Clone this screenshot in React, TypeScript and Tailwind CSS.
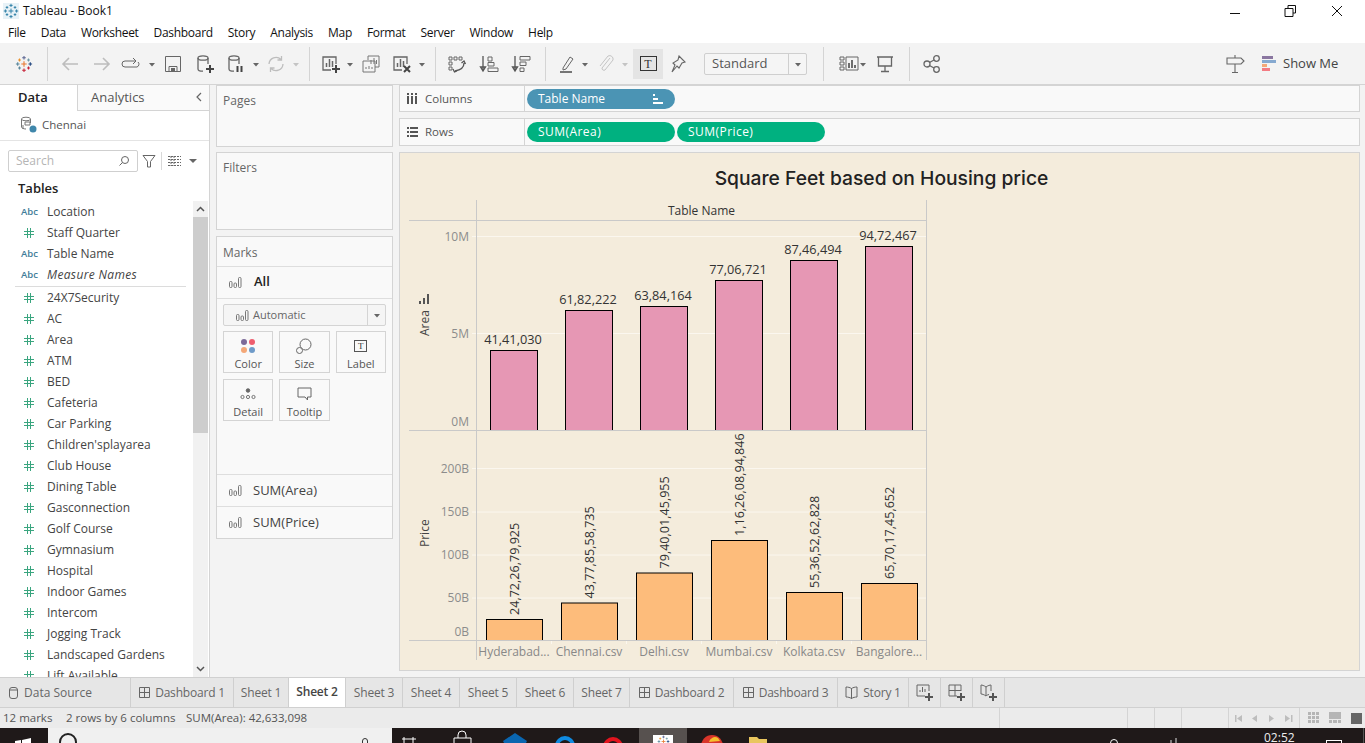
import React from "react";

const F = "font-['Open_Sans',sans-serif]";

function Svg({ w = 20, h = 20, cls = "", children }: { w?: number; h?: number; cls?: string; children: React.ReactNode }) {
  return (
    <svg width={w} height={h} viewBox={`0 0 ${w} ${h}`} fill="none" stroke="#666" strokeWidth="1.3" className={"shrink-0 " + cls}>
      {children}
    </svg>
  );
}

const Dd = ({ cls = "", light = false }: { cls?: string; light?: boolean }) => (
  <svg width="8" height="20" viewBox="0 0 8 20" className={"shrink-0 " + cls}>
    <path d="M1 9h6l-3 3.5z" fill={light ? "#c4c4c4" : "#666"} />
  </svg>
);
const Div = ({ cls = "" }: { cls?: string }) => <div className={"w-px h-[34px] bg-[#d4d4d4] shrink-0 " + cls} />;

const TableauMark = ({ size = 20, mono = false }: { size?: number; mono?: boolean }) => {
  const c = (x: number, y: number, l: number, col: string, k: string) => (
    <path key={k} d={`M${x - l} ${y}h${2 * l}M${x} ${y - l}v${2 * l}`} stroke={mono ? "#2f7fa6" : col} strokeWidth="1.2" />
  );
  return (
    <svg width={size} height={size} viewBox="0 0 20 20" fill="none" className={"shrink-0 " + (mono ? "bg-[#e8f2f7]" : "")}>
      {c(10, 10, 3, "#e8762d", "a")}
      {c(10, 3, 2, "#5b6591", "b")}
      {c(10, 17, 2, "#c72037", "c")}
      {c(3, 10, 2, "#59879b", "d")}
      {c(17, 10, 2, "#1f447e", "e")}
      {c(5, 5.5, 1.6, "#eb912b", "f")}
      {c(15, 5.5, 1.6, "#7099a6", "g")}
      {c(5, 14.5, 1.6, "#5b879b", "h")}
      {c(15, 14.5, 1.6, "#c72037", "i")}
    </svg>
  );
};

const SheetPlus = ({ x = false }: { x?: boolean }) => (
  <Svg>
    <path d="M15 10V3H2v13h8" />
    <path d="M5.5 13V9M8.5 13V5M11.5 13V7" strokeWidth="1.5" />
    {x ? (
      <path d="M12 12l6 6M18 12l-6 6" stroke="#444" strokeWidth="2" />
    ) : (
      <path d="M15 11v8M11 15h8" stroke="#444" strokeWidth="2" />
    )}
  </Svg>
);

const Cyl = ({ children }: { children: React.ReactNode }) => (
  <Svg>
    <ellipse cx="8" cy="4" rx="5" ry="2.2" />
    <path d="M3 4v11c0 1.2 2 2.2 5 2.2M13 4v6" />
    {children}
  </Svg>
);

function Toolbar() {
  return (
    <div className="h-[42px] bg-[#f3f3f3] border-b border-[#d4d4d4] flex items-center shrink-0">
      <div className="w-[47px] flex justify-center shrink-0"><TableauMark size={18} /></div>
      <Div />
      <Svg cls="ml-[12px]"><path d="M18 10H3M9 4l-6 6 6 6" stroke="#bdbdbd" strokeWidth="1.6" /></Svg>
      <Svg cls="ml-[12px]"><path d="M2 10h15M11 4l6 6-6 6" stroke="#bdbdbd" strokeWidth="1.6" /></Svg>
      <Svg cls="ml-[9px]"><path d="M15 7H4a3 3 0 000 6h12a3 3 0 001-5" strokeWidth="1" /><path d="M12 4l3 3-3 3" strokeWidth="1" /></Svg>
      <Dd cls="ml-[7px]" />
      <Svg cls="ml-[7px]"><path d="M2.5 2.5h15v15h-15zM6 17.5v-5h8v5" strokeWidth="1" /><path d="M8 14h4v3H8z" fill="#666" stroke="none" /></Svg>
      <div className="ml-[12px]"><Cyl><path d="M15 11v8M11 15h8" stroke="#444" strokeWidth="2" /></Cyl></div>
      <div className="ml-[11px]"><Cyl><path d="M11.5 12v6M15.5 12v6" stroke="#444" strokeWidth="2" /></Cyl></div>
      <Dd cls="ml-[6px]" />
      <Svg cls="ml-[6px]"><path d="M3 10a7 7 0 0112-4.5M17 10a7 7 0 01-12 4.5M15.5 2v4h-4M4.5 18v-4h4" stroke="#bdbdbd" /></Svg>
      <Dd cls="ml-[6px]" light />
      <Div cls="ml-[9px]" />
      <div className="ml-[11px]"><SheetPlus /></div>
      <Dd cls="ml-[5px]" />
      <Svg cls="ml-[7px]"><path d="M7 6V2h11v11h-4M2 7h12v11H2z" stroke="#777" strokeWidth="1" /><path d="M10 10V6M13 10V4M15.500 10V6M5 15v-2M8 15v-3M11 15v-2" stroke="#777" strokeWidth="1" /></Svg>
      <div className="ml-[11px]"><SheetPlus x /></div>
      <Dd cls="ml-[6px]" />
      <Div cls="ml-[9px]" />
      <Svg cls="ml-[11px]"><path d="M2 3h3v3H2zM7 3h3v3H7zM12 3h3v3h-3zM2 8h3v3H2zM2 13h3v3H2z" strokeWidth="1" /><path d="M17 9c0 4-3 7-9 8M14.500 9l2.500-2 1.500 3M6 15l1.500 3 2.500-1" stroke="#555" /></Svg>
      <Svg cls="ml-[12px]"><path d="M4 2v14M1.500 13L4 17l2.500-4z" stroke="#555" /><path d="M9 3h4v4H9zM9 8.500h6v3.500H9zM9 14h10v3.500H9z" strokeWidth="1" /></Svg>
      <Svg cls="ml-[12px]"><path d="M4 2v14M1.500 13L4 17l2.500-4z" stroke="#555" /><path d="M9 2.500h10V6H9zM9 8h6v3.500H9zM9 14h4v3.500H9z" strokeWidth="1" /></Svg>
      <Div cls="ml-[14px]" />
      <Svg cls="ml-[12px]"><path d="M5 14L12 3l3 2-7 10-3 1z" strokeWidth="1" /><path d="M2 18h12" stroke="#555" strokeWidth="1.6" /></Svg>
      <Dd cls="ml-[3px]" />
      <Svg cls="ml-[6px]"><path d="M15 4l-8 10a2 2 0 003 2l8-10a3.500 3.500 0 00-5-4L5 12" stroke="#c4c4c4" strokeWidth="1" /></Svg>
      <Dd cls="ml-[6px]" light />
      <div className="ml-[4px] w-[30px] h-[30px] bg-[#e4e4e4] flex items-center justify-center shrink-0">
        <div className="w-[17px] h-[15px] border border-[#333] flex items-center justify-center text-[12px] leading-none text-[#333] font-['Liberation_Serif',serif]">T</div>
      </div>
      <Svg cls="ml-[4px]"><path d="M12 2l6 6-3 1-3 5-2-2-5 6 3-7-2-2 5-3z" strokeWidth="1.1" /></Svg>
      <div className="ml-[17px] w-[103px] h-[22px] border border-[#cfcfcf] rounded-[2px] flex items-center shrink-0 bg-[#f5f5f5]">
        <span className="pl-[7px] text-[13px] text-[#555] flex-1">Standard</span>
        <div className="w-[18px] h-full border-l border-[#cfcfcf] flex items-center justify-center"><Dd /></div>
      </div>
      <Div cls="ml-[16px]" />
      <Svg cls="ml-[15px]"><path d="M1 3h4v3H1zM1 8h4v3H1zM1 13h4v3H1zM7 3h12v13H7z" strokeWidth="1" /><path d="M10 14V9M13 14V6M16 14v-3" stroke="#555" strokeWidth="1.7" /></Svg>
      <Dd />
      <Svg cls="ml-[8px]"><path d="M2 3h16M3.500 3v9h13V3M10 12v5M6 17.500h8" /></Svg>
      <Div cls="ml-[14px]" />
      <Svg cls="ml-[12px]"><circle cx="5" cy="10" r="3" /><circle cx="14.500" cy="4.500" r="2.800" /><circle cx="14.500" cy="15.500" r="2.800" /><path d="M7.500 8.500l4.500-2.500M7.500 11.500l4.500 2.500" /></Svg>
      <Svg cls="ml-[283px]"><path d="M10 1v3M2 4h14l3 3-3 3H2zM10 10v8M7 18.500h6" strokeWidth="1.1" /></Svg>
      <div className="ml-[17px] flex items-center gap-[7px] shrink-0">
        <div className="flex flex-col gap-px w-[14px]">
          <div className="h-[3px] w-[11px] bg-[#8a76a0]" />
          <div className="h-[3px] w-[14px] bg-[#86a9d0]" />
          <div className="h-[3px] w-[5px] bg-[#f4a878]" />
          <div className="h-[3px] w-[8px] bg-[#f37b83]" />
        </div>
        <span className="text-[13px] text-[#444]">Show Me</span>
      </div>
    </div>
  );
}

const fields: [string, "a" | "n"][] = [
  ["24X7Security", "n"], ["AC", "n"], ["Area", "n"], ["ATM", "n"], ["BED", "n"], ["Cafeteria", "n"], ["Car Parking", "n"],
  ["Children'splayarea", "n"], ["Club House", "n"], ["Dining Table", "n"], ["Gasconnection", "n"], ["Golf Course", "n"],
  ["Gymnasium", "n"], ["Hospital", "n"], ["Indoor Games", "n"], ["Intercom", "n"], ["Jogging Track", "n"],
  ["Landscaped Gardens", "n"], ["Lift Available", "n"],
];

function Field({ name, t, italic }: { name: string; t: "a" | "n"; italic?: boolean }) {
  return (
    <div className="h-[21px] flex items-center shrink-0">
      {t === "a" ? (
        <div className="w-[47px] pl-[21px] shrink-0 leading-none text-[9.500px] font-semibold text-[#3f7d99]">Abc</div>
      ) : (
        <div className="w-[47px] pl-[24px] shrink-0">
          <svg width="10" height="10" viewBox="0 0 10 10" fill="none" stroke="#3aa57f" strokeWidth="1" className="block">
            <path d="M3.500 0v10M6.500 0v10M0 3.500h10M0 6.500h10" />
          </svg>
        </div>
      )}
      <span className={"text-[12px] text-[#444] " + (italic ? "italic tracking-[0.35px]" : "")}>{name}</span>
    </div>
  );
}

function DataPane() {
  return (
    <div className="w-[210px] h-full bg-white border-r border-[#d4d4d4] flex flex-col shrink-0 overflow-hidden">
      <div className="h-[26px] flex shrink-0">
        <div className="w-[77px] flex items-center pl-[18px] font-semibold text-[13px] text-[#222]">Data</div>
        <div className="flex-1 bg-[#fafafa] border-l border-b border-[#d4d4d4] flex items-center pl-[13px] text-[13px] text-[#555] relative">
          Analytics
          <svg width="8" height="10" viewBox="0 0 8 10" className="absolute right-[6px] top-[7px]" fill="none" stroke="#666" strokeWidth="1.2"><path d="M6 1L2 5l4 4" /></svg>
        </div>
      </div>
      <div className="h-[30px] pb-[2px] border-b border-[#e4e4e4] flex items-center pl-[20px] shrink-0">
        <svg width="17" height="17" viewBox="0 0 17 17" fill="none" stroke="#777" strokeWidth="1" className="shrink-0">
          <ellipse cx="6" cy="3" rx="4.500" ry="1.800" />
          <path d="M1.500 3v8c0 1 2 2 4.500 2M10.500 3v4M5 6h5v3H5zM3 9v4" />
          <circle cx="13" cy="13" r="3.500" fill="#3f87ab" stroke="none" />
        </svg>
        <span className="ml-[5px] text-[11.500px] text-[#555]">Chennai</span>
      </div>
      <div className="h-[21px] mt-[9px] flex items-center shrink-0">
        <div className="ml-[8px] w-[130px] h-[22px] border border-[#cfcfcf] rounded-[2px] flex items-center justify-between px-[7px] text-[12px] text-[#b5b5b5]">
          Search
          <svg width="12" height="12" viewBox="0 0 12 12" fill="none" stroke="#666" strokeWidth="1"><circle cx="7" cy="5" r="3.500" /><path d="M4.500 7.500L1.500 10.500" /></svg>
        </div>
        <svg width="16" height="16" viewBox="0 0 16 16" fill="none" stroke="#666" strokeWidth="1" className="ml-[3px] shrink-0"><path d="M2 2.500h12L9.500 8.500V14h-3V8.500z" /></svg>
        <div className="ml-[4px] w-px h-[18px] bg-[#d8d8d8]" />
        <svg width="13" height="10" viewBox="0 0 13 10" fill="none" stroke="#666" strokeWidth="1" className="ml-[6px] shrink-0"><path d="M0 .5h13M0 3.500h13M0 6.500h13M0 9.500h13M3 0v10M6 0v10" strokeDasharray="2 1" /></svg>
        <svg width="8" height="6" viewBox="0 0 8 6" className="ml-[8px] shrink-0"><path d="M0 1h8L4 5z" fill="#666" /></svg>
      </div>
      <div className="h-[20px] mt-[8px] pl-[18px] text-[13px] font-semibold text-[#222] flex items-center shrink-0">Tables</div>
      <div className="flex-1 flex min-h-0 mt-[2px] overflow-hidden">
        <div className="flex-1 flex flex-col overflow-hidden min-w-0">
          <Field name="Location" t="a" />
          <Field name="Staff Quarter" t="n" />
          <Field name="Table Name" t="a" />
          <Field name="Measure Names" t="a" italic />
          <div className="h-[2px] ml-[15px] mr-[7px] border-b border-[#dcdcdc] shrink-0" />
          {fields.map(([n, t]) => <Field key={n} name={n} t={t} />)}
        </div>
        <div className="w-[15px] mr-px flex flex-col bg-[#f1f1f1] shrink-0">
          <div className="h-[16px] flex items-center justify-center">
            <svg width="9" height="6" viewBox="0 0 9 6" fill="none" stroke="#555" strokeWidth="1.500"><path d="M1 5l3.500-3.500L8 5" /></svg>
          </div>
          <div className="h-[216px] bg-[#cdcdcd]" />
          <div className="flex-1" />
          <div className="h-[16px] flex items-center justify-center">
            <svg width="9" height="6" viewBox="0 0 9 6" fill="none" stroke="#555" strokeWidth="1.500"><path d="M1 1l3.500 3.500L8 1" /></svg>
          </div>
        </div>
      </div>
    </div>
  );
}

const MarkIcon = () => (
  <svg width="13" height="11" viewBox="0 0 13 11" fill="none" stroke="#777" strokeWidth="1" className="shrink-0">
    <rect x=".5" y="4.500" width="2.500" height="6" rx="1" />
    <rect x="5" y="6" width="2.500" height="4.500" rx="1" />
    <rect x="9.500" y=".5" width="2.500" height="10" rx="1" />
  </svg>
);

function Card({ label, children }: { label: string; children: React.ReactNode }) {
  return (
    <div className="h-[42px] bg-[#f9f9f9] border border-[#d4d4d4] flex flex-col items-center justify-end pb-px text-[11px] text-[#555]">
      <div className="h-[20px] flex items-center justify-center">{children}</div>
      <span className="leading-[15px]">{label}</span>
    </div>
  );
}

function Cards() {
  return (
    <div className="w-[177px] ml-[6px] h-full flex flex-col shrink-0">
      <div className="h-[62px] bg-[#f9f9f9] border border-[#d4d4d4] px-[6px] pt-[6px] text-[12px] text-[#666]">Pages</div>
      <div className="h-[78px] mt-[5px] bg-[#f9f9f9] border border-[#d4d4d4] px-[6px] pt-[6px] text-[12px] text-[#666]">Filters</div>
      <div className="h-[303px] mt-[6px] bg-[#f9f9f9] border border-[#d4d4d4] flex flex-col">
        <div className="h-[29px] pt-[2px] px-[6px] flex items-center text-[12px] text-[#666] shrink-0">Marks</div>
        <div className="h-[33px] pb-px border-t border-b border-[#dedede] flex items-center pl-[12px] text-[13px] font-semibold text-[#222] shrink-0">
          <MarkIcon /><span className="ml-[12px]">All</span>
        </div>
        <div className="mx-[6px] mt-[5px] h-[22px] bg-[#f5f5f5] border border-[#d4d4d4] rounded-[2px] flex items-center text-[11px] text-[#666] shrink-0">
          <div className="pl-[12px] flex-1 flex items-center gap-[4px]"><MarkIcon />Automatic</div>
          <div className="w-[18px] h-full border-l border-[#d4d4d4] flex items-center justify-center"><Dd /></div>
        </div>
        <div className="mx-[6px] mt-[5px] grid grid-cols-3 gap-x-[6px] gap-y-[6px] shrink-0">
          <Card label="Color">
            <svg width="16" height="16" viewBox="0 0 16 16"><circle cx="4" cy="4" r="3" fill="#7c6a98" /><circle cx="12" cy="4" r="3" fill="#ee5e6e" /><circle cx="4" cy="12" r="3" fill="#f4a878" /><circle cx="12" cy="12" r="3" fill="#6f9bc9" /></svg>
          </Card>
          <Card label="Size">
            <svg width="16" height="16" viewBox="0 0 16 16" fill="none" stroke="#666"><circle cx="9.500" cy="6.500" r="5.500" /><circle cx="3.500" cy="12.500" r="3" fill="#f9f9f9" /></svg>
          </Card>
          <Card label="Label">
            <div className="w-[13px] h-[12px] border border-[#555] flex items-center justify-center text-[9px] leading-none font-['Liberation_Serif',serif] text-[#333]">T</div>
          </Card>
          <Card label="Detail">
            <svg width="16" height="12" viewBox="0 0 16 12" fill="none" stroke="#666" strokeWidth=".9"><circle cx="8" cy="2.500" r="1.800" fill="#666" /><circle cx="2.500" cy="9" r="1.600" /><circle cx="8" cy="9" r="1.600" /><circle cx="13.500" cy="9" r="1.600" /></svg>
          </Card>
          <Card label="Tooltip">
            <svg width="15" height="14" viewBox="0 0 15 14" fill="none" stroke="#666"><path d="M1 1h13v9H10.500v3L8 10H1z" /></svg>
          </Card>
        </div>
        <div className="flex-1" />
        <div className="h-[32px] border-t border-[#dedede] flex items-center pl-[12px] text-[13px] text-[#444] shrink-0">
          <MarkIcon /><span className="ml-[11px]">SUM(Area)</span>
        </div>
        <div className="h-[32px] border-t border-[#dedede] flex items-center pl-[12px] text-[13px] text-[#444] shrink-0">
          <MarkIcon /><span className="ml-[11px]">SUM(Price)</span>
        </div>
      </div>
    </div>
  );
}

function Shelf({ h, label, icon, children }: { h: string; label: string; icon: React.ReactNode; children: React.ReactNode }) {
  return (
    <div className={h + " bg-[#f9f9f9] border border-[#d4d4d4] flex items-center shrink-0"}>
      <div className="w-[125px] h-full border-r border-[#d4d4d4] flex items-center pl-[7px] text-[11.500px] text-[#555] shrink-0">
        <div className="w-[12px] flex items-center mr-[6px]">{icon}</div>{label}
      </div>
      <div className="pl-[2px] flex gap-[2px]">{children}</div>
    </div>
  );
}

const Pill = ({ label, green, sort }: { label: string; green?: boolean; sort?: boolean }) => (
  <div className={"w-[148px] h-[20px] rounded-full flex items-center justify-between pl-[11px] pr-[12px] text-[12px] text-white " + (green ? "bg-[#00b180] tracking-[0.45px]" : "bg-[#4b94b4]")}>
    {label}
    {sort && (
      <svg width="10" height="10" viewBox="0 0 10 10" fill="#fff"><path d="M0 0h2v2H0zM0 4h5v2H0zM0 8h10v2H0z" /></svg>
    )}
  </div>
);

const pink = [[490, 350, "41,41,030"], [565, 310, "61,82,222"], [640, 306, "63,84,164"], [715, 280, "77,06,721"], [790, 260, "87,46,494"], [865, 246, "94,72,467"]] as const;
const orange = [[486, 619, "24,72,26,79,925"], [561, 602.5, "43,77,85,58,735"], [636, 572.5, "79,40,01,45,955"], [711, 540, "1,16,26,08,94,846"], [786, 592, "55,36,52,62,828"], [861, 583, "65,70,17,45,652"]] as const;
const cats = ["Hyderabad...", "Chennai.csv", "Delhi.csv", "Mumbai.csv", "Kolkata.csv", "Bangalore..."];

function Chart() {
  return (
    <svg width="959" height="474" viewBox="400 196 959 474" className="block" fontFamily="'Open Sans',sans-serif">
      {[236, 333, 468, 511.500, 554.500, 597.500].map(y => (
        <line key={y} x1="472" x2="926" y1={y + 0.5} y2={y + 0.5} stroke="#fbf7ef" strokeWidth="1" />
      ))}
      {[551.500, 626.500, 701.500, 776.500, 851.500].map(x => (
        <line key={x} x1={x} x2={x} y1="641" y2="644" stroke="#fbf7ef" strokeWidth="1" />
      ))}
      <text x="701.500" y="215" textAnchor="middle" fontSize="12" fill="#333">Table Name</text>
      {[["10M", 241], ["5M", 338], ["0M", 426], ["200B", 473], ["150B", 516], ["100B", 559], ["50B", 602], ["0B", 636]].map(([t, y]) => (
        <text key={t} x="469" y={y} textAnchor="end" fontSize="12" fill="#8c8c8c">{t}</text>
      ))}
      <text transform="translate(429 336) rotate(-90)" fontSize="12" fill="#444">Area</text>
      <text transform="translate(429 547) rotate(-90)" fontSize="12" fill="#444">Price</text>
      <path d="M419 301h2v3h-2zM423 298h2v6h-2zM427 294h2v10h-2z" fill="#555" />
      {pink.map(([x, y, t]) => (
        <g key={t}>
          <rect x={x + 0.5} y={y + 0.5} width="47" height={430 - y} fill="#e697b4" stroke="#000" />
          <text x={x + 23} y={y - 6} textAnchor="middle" fontSize="12.750" fill="#333">{t}</text>
        </g>
      ))}
      {orange.map(([x, y, t]) => (
        <g key={t}>
          <rect x={x + 0.5} y={y + 0.5} width="56" height={640 - y} fill="#fdbc7b" stroke="#000" />
          <text transform={`translate(${x + 33} ${y - 4}) rotate(-90)`} fontSize="12.600" fill="#333">{t}</text>
        </g>
      ))}
      <g stroke="#c9c9c9" strokeWidth="1">
        <line x1="409" x2="926" y1="220.500" y2="220.500" />
        <line x1="409" x2="926" y1="430.500" y2="430.500" />
        <line x1="409" x2="926" y1="640.500" y2="640.500" />
        <line x1="476.500" x2="476.500" y1="200" y2="660" />
        <line x1="926.500" x2="926.500" y1="200" y2="660" />
      </g>
      {cats.map((c, i) => (
        <text key={c} x={514 + 75 * i} y="656" textAnchor="middle" fontSize="12" fill="#888">{c}</text>
      ))}
    </svg>
  );
}

function RightPane() {
  return (
    <div className="w-[961px] ml-[6px] h-full flex flex-col shrink-0">
      <Shelf h="h-[27px]" label="Columns" icon={<svg width="10" height="11" viewBox="0 0 10 11"><path d="M0 0h2v2H0zM4 0h2v2H4zM8 0h2v2H8zM0 3h2v8H0zM4 3h2v8H4zM8 3h2v8H8z" fill="#555" /></svg>}>
        <Pill label="Table Name" sort />
      </Shelf>
      <div className="h-[6px] shrink-0" />
      <Shelf h="h-[28px]" label="Rows" icon={<svg width="11" height="10" viewBox="0 0 11 10"><path d="M0 0h2v2H0zM3 0h8v2H3zM0 4h2v2H0zM3 4h8v2H3zM0 8h2v2H0zM3 8h8v2H3z" fill="#555" /></svg>}>
        <Pill label="SUM(Area)" green />
        <Pill label="SUM(Price)" green />
      </Shelf>
      <div className="mt-[6px] h-[519px] bg-[#f4ecdc] border border-[#d4d4d4] flex flex-col shrink-0">
        <div className="h-[43px] flex items-center justify-center pt-[7px] pl-[4px] text-[19.250px] font-medium text-[#222] shrink-0 font-['Inter',sans-serif]">
          Square Feet based on Housing price
        </div>
        <Chart />
      </div>
    </div>
  );
}

const Grid4 = () => (
  <svg width="11" height="11" viewBox="0 0 11 11" fill="none" stroke="#666" strokeWidth="1" className="shrink-0"><path d="M.5.5h10v10H.5zM.5 5.500h10M5.500.5v10" /></svg>
);

function Tab({ w, label, icon, active }: { w: string; label: string; icon?: React.ReactNode; active?: boolean }) {
  return (
    <div className={w + " h-full border-r border-[#cfcfcf] flex items-center justify-center gap-[5px] text-[12px] tracking-[-0.2px] shrink-0 " + (active ? "bg-white text-[#444] font-semibold pb-px" : "text-[#666]")}>
      {icon}{label}
    </div>
  );
}

function Tabs() {
  const addIcon = (inner: React.ReactNode) => (
    <svg width="18" height="18" viewBox="0 0 18 18" fill="none" stroke="#666" strokeWidth="1">
      {inner}
      <path d="M13 9v8M9 13h8" stroke="#555" strokeWidth="2" />
    </svg>
  );
  return (
    <div className="h-[31px] bg-[#e6e6e6] border-t border-b border-[#d0d0d0] flex shrink-0">
      <div className="w-[131px] h-full border-r border-[#cfcfcf] flex items-center pl-[9px] gap-[6px] text-[12px] text-[#666] shrink-0">
        <svg width="9" height="12" viewBox="0 0 9 12" fill="none" stroke="#666" strokeWidth="1"><rect x=".5" y=".5" width="8" height="11" rx="2.500" /><path d="M.5 3h8" /></svg>
        Data Source
      </div>
      <Tab w="w-[103px]" label="Dashboard 1" icon={<Grid4 />} />
      <Tab w="w-[55px]" label="Sheet 1" />
      <Tab w="w-[57px]" label="Sheet 2" active />
      <Tab w="w-[57px]" label="Sheet 3" />
      <Tab w="w-[57px]" label="Sheet 4" />
      <Tab w="w-[57px]" label="Sheet 5" />
      <Tab w="w-[57px]" label="Sheet 6" />
      <Tab w="w-[56px]" label="Sheet 7" />
      <Tab w="w-[104px]" label="Dashboard 2" icon={<Grid4 />} />
      <Tab w="w-[104px]" label="Dashboard 3" icon={<Grid4 />} />
      <Tab w="w-[71px]" label="Story 1" icon={<svg width="13" height="13" viewBox="0 0 13 13" fill="none" stroke="#666" strokeWidth="1"><path d="M6.500 2.500C5 1.500 3 1 1 1v10c2 0 4 .5 5.500 1.500M6.500 2.500C8 1.500 10 1 12 1v10c-2 0-4 .5-5.500 1.500zM6.500 2.500v10" /></svg>} />
      <div className="w-[32px] border-r border-[#cfcfcf] flex items-center justify-center">{addIcon(<path d="M9 12H1V1h12v6M4 8V6M6.500 8V3M9 8V5" />)}</div>
      <div className="w-[32px] border-r border-[#cfcfcf] flex items-center justify-center">{addIcon(<path d="M9 12H1V1h12v6M1 6.500h12M7 1v11" />)}</div>
      <div className="w-[32px] border-r border-[#cfcfcf] flex items-center justify-center">{addIcon(<path d="M6 3C4 1.500 2 1 1 1v9c1 0 3 .5 5 2 .5-.5 1-1 3-1.500M6 3c2-1.500 4-2 5-2v6M6 3v9" />)}</div>
    </div>
  );
}

function Status() {
  const Sep = ({ w }: { w: string }) => <div className={w + " h-full border-l border-[#d4d4d4] shrink-0"} />;
  return (
    <div className="h-[20px] bg-[#ebebeb] flex items-center text-[11.500px] text-[#555] shrink-0">
      <span className="w-[66px] pl-[3px] shrink-0">12 marks</span>
      <span className="w-[120px] shrink-0">2 rows by 6 columns</span>
      <span className="w-[813px] shrink-0">SUM(Area): 42,633,098</span>
      <Sep w="w-[128px]" />
      <Sep w="w-[27px]" />
      <Sep w="w-[27px]" />
      <Sep w="w-[47px]" />
      <div className="w-[71px] h-full border-l border-[#d4d4d4] flex items-center justify-center shrink-0">
        <svg width="58" height="9" viewBox="0 0 58 9" fill="#bdbdbd"><path d="M0 1h1.500v7H0zM7 1v7L2 4.500zM22 1v7l-5-3.500zM34 1v7l5-3.500zM50 1v7l5-3.500zM56 1h1.500v7H56z" /></svg>
      </div>
      <div className="flex-1 h-full border-l border-[#d4d4d4] flex items-center pl-[8px] gap-[9px]">
        <svg width="12" height="12" viewBox="0 0 12 12" fill="#b5b5b5"><path d="M0 0h3v3H0zM4 0h3v3H4zM8 0h3v3H8zM0 4h3v3H0zM4 4h3v3H4zM8 4h3v3H8zM0 8h3v3H0zM4 8h3v3H4zM8 8h3v3H8z" /></svg>
        <svg width="12" height="12" viewBox="0 0 12 12" fill="#b5b5b5"><path d="M0 0h12v7H0zM0 8h3v3H0zM4 8h4v3H4zM9 8h3v3H9z" /></svg>
        <div className="w-[11px] h-[11px] bg-[#666] ml-px" />
      </div>
    </div>
  );
}

function Taskbar() {
  return (
    <div className="h-[15px] bg-[#1f1919] flex items-start shrink-0 overflow-hidden relative text-white">
      <svg width="48" height="15" viewBox="0 0 48 15" className="shrink-0"><path d="M15 13l6-1v3h-6zM22 12l9-2v5h-9z" fill="#fff" /></svg>
      <div className="w-[344px] h-[15px] bg-[#f0f0f0] shrink-0 relative">
        <div className="absolute left-[11px] top-[5px] w-[18px] h-[18px] rounded-full border-2 border-[#222]" />
        <div className="absolute left-[314px] top-[10px] w-[6px] h-[8px] border border-[#333] rounded-t-[3px]" />
      </div>
      <svg width="247" height="15" viewBox="0 0 247 15" className="shrink-0">
        <path d="M10 11h14M12 9v6M21 9v6" stroke="#fff" fill="none" />
        <path d="M62 15V10h17v5M66 10V7a4 4 0 018 0v3" stroke="#fff" fill="none" />
        <path d="M123 5l12 8-1 2h-22l-1-2z" fill="#0a66b0" />
        <circle cx="173" cy="18" r="8" fill="none" stroke="#0f8ae0" strokeWidth="4" />
        <circle cx="221" cy="19" r="8" fill="none" stroke="#e3141e" strokeWidth="4" />
      </svg>
      <div className="w-[48px] h-[15px] bg-[#57514f] flex justify-center items-start pt-[7px] shrink-0">
        <div className="w-[20px] h-[14px] bg-white flex justify-center">
          <TableauMark size={13} />
        </div>
      </div>
      <svg width="100" height="15" viewBox="0 0 100 15" className="shrink-0">
        <circle cx="25" cy="18" r="11" fill="#d9352a" />
        <path d="M22 14a6 6 0 019 -4l2 3z" fill="#f5c02e" />
        <path d="M62 9h8l2 2h8v4H62z" fill="#e9c65e" />
      </svg>
      <svg width="150" height="15" viewBox="0 0 150 15" className="absolute left-[1100px] top-0">
        <circle cx="14" cy="15" r="3.500" fill="none" stroke="#fff" />
        <path d="M71 15v-3M76 10v5" stroke="#ddd" />
      </svg>
      <span className="absolute left-[1264px] top-px text-[12px] leading-[18px] text-[#eee]">02:52</span>
      <div className="absolute left-[1326px] top-[12px] w-[16px] h-[8px] border border-white" />
      <div className="absolute right-[1px] top-0 w-px h-[15px] bg-[#555]" />
    </div>
  );
}

export default function App() {
  return (
    <div className={"w-[1365px] h-[743px] overflow-hidden flex flex-col bg-[#f3f3f3] " + F}>
      <div className="h-[22px] bg-white flex items-center pl-[3px] shrink-0 relative">
        <TableauMark size={16} mono />
        <span className="ml-[4px] text-[12px] text-[#111]">Tableau - Book1</span>
        <svg width="120" height="16" viewBox="0 0 120 16" fill="none" stroke="#111" strokeWidth="1" className="ml-auto mr-[15px]">
          <path d="M0 10.500h10M55 5.500h8v8h-8zM58 5V2.500h7.500V10H63M102 3l10 10M112 3l-10 10" />
        </svg>
      </div>
      <div className="h-[21px] bg-white flex items-center pl-[8px] gap-[15px] text-[12px] tracking-[-0.3px] text-[#111] shrink-0">
        {["File", "Data", "Worksheet", "Dashboard", "Story", "Analysis", "Map", "Format", "Server", "Window", "Help"].map(m => (
          <span key={m}>{m}</span>
        ))}
      </div>
      <Toolbar />
      <div className="h-[592px] flex shrink-0">
        <DataPane />
        <Cards />
        <RightPane />
      </div>
      <Tabs />
      <Status />
      <Taskbar />
    </div>
  );
}
